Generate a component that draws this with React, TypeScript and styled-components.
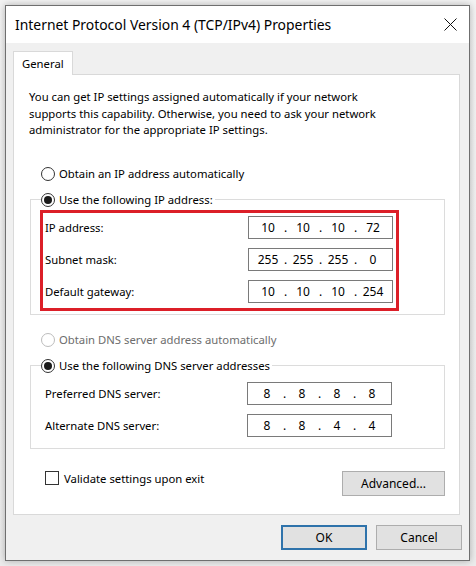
import React from "react";
import styled, { createGlobalStyle } from "styled-components";

const GlobalStyle = createGlobalStyle`
  html, body { margin: 0; padding: 0; background: #eeeeee; }
  body {
    font-family: "Noto Sans", "Open Sans", sans-serif;
    font-size: 11.3px;
    color: #000;
  }
  * { box-sizing: border-box; }
`;

const Screen = styled.div`
  padding: 5px;
  width: 476px;
  height: 566px;
  background: linear-gradient(#f3f3f3, #ececec);
`;

const Window = styled.div`
  width: 465px;
  height: 556px;
  border: 1px solid #6f6f6f;
  box-shadow: 0 0 7px rgba(0, 0, 0, 0.28);
  display: flex;
  flex-direction: column;
  background: #f0f0f0;
`;

const TitleBar = styled.div`
  height: 37px;
  background: #ffffff;
  display: flex;
  align-items: center;
  justify-content: space-between;
  padding-left: 9px;
`;

const Title = styled.div`
  font-size: 13.9px;
  color: #000;
`;

const Close = styled.div`
  width: 38px;
  height: 37px;
  display: flex;
  align-items: center;
  justify-content: center;
`;

const Body = styled.div`
  flex: 1;
  display: flex;
  flex-direction: column;
  padding: 8px 9px 10px 7px;
`;

const TabStrip = styled.div`
  display: flex;
`;

const Tab = styled.div`
  height: 24px;
  margin-bottom: -1px;
  padding: 0 8px;
  display: flex;
  align-items: center;
  background: #fff;
  border: 1px solid #d9d9d9;
  border-bottom: none;
  position: relative;
  z-index: 1;
`;

const Panel = styled.div`
  height: 441px;
  background: #fff;
  border: 1px solid #d9d9d9;
  padding: 14px 14px 18px 15px;
  display: flex;
  flex-direction: column;
`;

const Intro = styled.p`
  margin: 0 0 25px 0;
  line-height: 16.5px;
`;

const RadioRow = styled.label<{ $disabled?: boolean; $top?: number }>`
  display: flex;
  align-items: center;
  gap: 4px;
  height: 20px;
  margin: ${(p) => p.$top ?? 0}px 0 0 12px;
  color: ${(p) => (p.$disabled ? "#6d6d6d" : "#000")};
`;

const RadioMark = styled.span<{ $checked?: boolean; $disabled?: boolean }>`
  width: 14px;
  height: 14px;
  border-radius: 50%;
  border: 1px solid ${(p) => (p.$disabled ? "#bcbcbc" : "#333")};
  background: #fff;
  display: flex;
  align-items: center;
  justify-content: center;
  &::after {
    content: "";
    width: 8px;
    height: 8px;
    border-radius: 50%;
    background: #1b1b1b;
    display: ${(p) => (p.$checked ? "block" : "none")};
  }
`;

const Group = styled.fieldset<{ $top: number }>`
  margin: ${(p) => p.$top}px 0 0 1px;
  padding: 0;
  border: 1px solid #dcdcdc;
  min-inline-size: 0;
`;

const Legend = styled.legend`
  margin-left: 10px;
  padding: 0 2px 0 0;
`;

const LegendRow = styled.span`
  display: flex;
  align-items: center;
  gap: 4px;
  height: 20px;
`;

const Highlight = styled.div`
  margin: 0 0 3px 9px;
  width: 359px;
  border: 3px solid #dc1f28;
  padding: 3px 3px 5px 2px;
  display: flex;
  flex-direction: column;
  gap: 9px;
`;

const FieldRows = styled.div`
  padding: 6px 52px 11px 14px;
  display: flex;
  flex-direction: column;
  gap: 9px;
`;

const FieldRow = styled.div`
  display: flex;
  align-items: center;
  justify-content: space-between;
  height: 23px;
`;

const IpBox = styled.div`
  width: 145px;
  height: 23px;
  border: 1px solid #7a7a7a;
  background: #fff;
  display: flex;
  align-items: center;
  padding-left: 5px;
  font-size: 12px;
`;

const Octet = styled.span`
  width: 28px;
  text-align: center;
`;

const Dot = styled.span`
  width: 7px;
  text-align: center;
`;

const BottomRow = styled.div`
  margin-top: 22px;
  display: flex;
  justify-content: space-between;
  align-items: flex-start;
`;

const CheckLabel = styled.label`
  margin-left: 16px;
  display: flex;
  align-items: center;
  gap: 5px;
  height: 15px;
`;

const CheckBox = styled.span`
  width: 14px;
  height: 14px;
  border: 1px solid #333;
  background: #fff;
`;

const Button = styled.button<{ $width: number; $default?: boolean }>`
  width: ${(p) => p.$width}px;
  height: 25px;
  background: #e1e1e1;
  border: ${(p) => (p.$default ? "2px solid #2f73ab" : "1px solid #adadad")};
  font-family: inherit;
  font-size: 12px;
  color: #000;
  padding: 0;
  border-radius: 0;
`;

const ButtonRow = styled.div`
  margin-top: 10px;
  margin-right: -2px;
  display: flex;
  justify-content: flex-end;
  gap: 9px;
`;

const Ip = ({ value }: { value: string }) => {
  const parts = value.split(".");
  return (
    <IpBox>
      {parts.map((p, i) => (
        <React.Fragment key={i}>
          <Octet>{p}</Octet>
          {i < 3 && <Dot>.</Dot>}
        </React.Fragment>
      ))}
    </IpBox>
  );
};

export default function App() {
  return (
    <>
      <GlobalStyle />
      <Screen>
        <Window>
          <TitleBar>
            <Title>Internet Protocol Version 4 (TCP/IPv4) Properties</Title>
            <Close>
              <svg width="13" height="13" viewBox="0 0 13 13">
                <path d="M0.5 0.5 L12.5 12.5 M12.5 0.5 L0.5 12.5" stroke="#111" strokeWidth="1" />
              </svg>
            </Close>
          </TitleBar>
          <Body>
            <TabStrip>
              <Tab>General</Tab>
            </TabStrip>
            <Panel>
              <Intro>
                You can get IP settings assigned automatically if your network
                <br />
                supports this capability. Otherwise, you need to ask your network
                <br />
                administrator for the appropriate IP settings.
              </Intro>
              <RadioRow>
                <RadioMark />
                Obtain an IP address automatically
              </RadioRow>
              <Group $top={6}>
                <Legend>
                  <LegendRow>
                    <RadioMark $checked />
                    Use the following IP address:
                  </LegendRow>
                </Legend>
                <Highlight>
                  <FieldRow>
                    IP address:
                    <Ip value="10.10.10.72" />
                  </FieldRow>
                  <FieldRow>
                    Subnet mask:
                    <Ip value="255.255.255.0" />
                  </FieldRow>
                  <FieldRow>
                    Default gateway:
                    <Ip value="10.10.10.254" />
                  </FieldRow>
                </Highlight>
              </Group>
              <RadioRow $disabled $top={15}>
                <RadioMark $disabled />
                Obtain DNS server address automatically
              </RadioRow>
              <Group $top={6}>
                <Legend>
                  <LegendRow>
                    <RadioMark $checked />
                    Use the following DNS server addresses
                  </LegendRow>
                </Legend>
                <FieldRows>
                  <FieldRow>
                    Preferred DNS server:
                    <Ip value="8.8.8.8" />
                  </FieldRow>
                  <FieldRow>
                    Alternate DNS server:
                    <Ip value="8.8.4.4" />
                  </FieldRow>
                </FieldRows>
              </Group>
              <BottomRow>
                <CheckLabel>
                  <CheckBox />
                  Validate settings upon exit
                </CheckLabel>
                <Button $width={103}>Advanced...</Button>
              </BottomRow>
            </Panel>
            <ButtonRow>
              <Button $width={86} $default>
                OK
              </Button>
              <Button $width={86}>Cancel</Button>
            </ButtonRow>
          </Body>
        </Window>
      </Screen>
    </>
  );
}
